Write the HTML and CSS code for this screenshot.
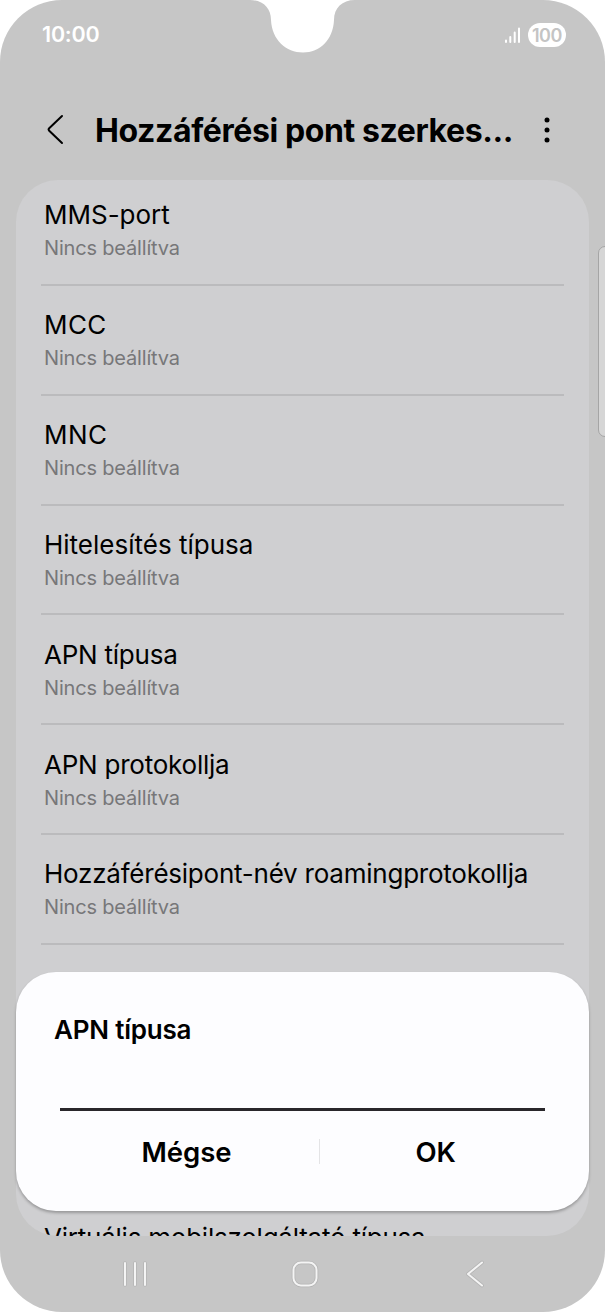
FILE: index.html
```html
<!DOCTYPE html>
<html lang="hu">
<head>
<meta charset="utf-8">
<title>Hozzáférési pont szerkesztése</title>
<link rel="stylesheet" href="styles.css">
</head>
<body>
<main class="screen">
  <svg class="notch" width="106" height="54" viewBox="0 0 106 54"><path d="M0 0C13 0 21 8 21 20C22 40 36 52.500 53 52.500S83 40 84 20C84 8 92 0 105 0Z" fill="#fff"/></svg>
  <header class="status">
    <span class="clock">10:00</span>
    <span class="indicators">
      <svg width="17" height="18" viewBox="0 0 17 18" stroke="#fff" stroke-width="2" stroke-linecap="round"><path d="M2 14.500v1.500M6.300 11v5M10.700 6.500v9.500M15 2.500v13.500"/></svg>
      <span class="battery">100</span>
    </span>
  </header>
  <div class="toolbar">
    <svg class="back" width="20" height="32" viewBox="0 0 20 32" fill="none" stroke="#000" stroke-width="2" stroke-linecap="round" stroke-linejoin="round"><path d="M17 3L4.200 15.300Q3 16.500 4.200 17.700L17 30"/></svg>
    <h1 class="heading">Hozzáférési pont szerkes...</h1>
    <svg class="more" width="8" height="28" viewBox="0 0 8 28"><circle cx="4" cy="4" r="2.500"/><circle cx="4" cy="14" r="2.500"/><circle cx="4" cy="24" r="2.500"/></svg>
  </div>
  <section class="card">
    <div class="row first"><div class="title mms">MMS-port</div><div class="sub">Nincs beállítva</div></div>
    <div class="row"><div class="title code">MCC</div><div class="sub">Nincs beállítva</div></div>
    <div class="row"><div class="title code">MNC</div><div class="sub">Nincs beállítva</div></div>
    <div class="row"><div class="title auth">Hitelesítés típusa</div><div class="sub">Nincs beállítva</div></div>
    <div class="row"><div class="title">APN típusa</div><div class="sub">Nincs beállítva</div></div>
    <div class="row"><div class="title">APN protokollja</div><div class="sub">Nincs beállítva</div></div>
    <div class="row"><div class="title">Hozzáférésipont-név roamingprotokollja</div><div class="sub">Nincs beállítva</div></div>
    <div class="row last"><div class="title">Virtuális mobilszolgáltató típusa</div></div>
  </section>
  <nav class="navbar">
    <svg width="26" height="28" viewBox="0 0 26 28" class="navicon"><path class="edge" d="M3 3v22M13 3v22M23 3v22"/><path d="M3 3v22M13 3v22M23 3v22"/></svg>
    <svg width="28" height="28" viewBox="0 0 28 28" class="navicon home"><rect class="edge" x="2.500" y="2.500" width="23" height="23" rx="7.500"/><rect x="2.500" y="2.500" width="23" height="23" rx="7.500"/></svg>
    <svg width="20" height="28" viewBox="0 0 20 28" class="navicon"><path class="edge" d="M17 2.500L3 14L17 25.500"/><path d="M17 2.500L3 14L17 25.500"/></svg>
  </nav>
  <div class="handle"></div>
  <section class="dialog">
    <h2 class="question">APN típusa</h2>
    <div class="field"></div>
    <div class="actions"><span class="cancel">Mégse</span><i class="split"></i><span class="ok">OK</span></div>
  </section>
</main>
</body>
</html>
```
FILE: styles.css
```css
* { box-sizing: border-box; }
body { margin: 0; background: #fff; font-family: Inter, "Liberation Sans", sans-serif; }
.screen { position: relative; width: 605px; height: 1312px; overflow: hidden; display: flex; flex-direction: column; background: #c6c6c6; border-radius: 62px; color: #000; }
.notch { position: absolute; left: 250px; top: 0; }
.status { height: 70px; padding: 0 39px 0 42px; display: flex; align-items: center; justify-content: space-between; }
.clock { color: #fff; font-size: 21.500px; font-weight: 600; line-height: 28px; letter-spacing: -.2px; margin-top: -2px; }
.indicators { display: flex; align-items: center; gap: 7px; }
.battery { width: 38px; height: 24px; border-radius: 12px; background: #fff; color: #c4c4c4; font-size: 18px; font-weight: 600; line-height: 25px; text-align: center; letter-spacing: -.4px; }
.toolbar { height: 110px; padding: 9px 54px 0 45px; display: flex; align-items: center; }
.back { flex: none; margin-top: -1px; }
.heading { margin: 2px auto 0 30px; font-size: 32px; font-weight: 700; line-height: 42px; letter-spacing: -.4px; white-space: nowrap; }
.more { flex: none; }
.card { height: 1056px; margin: 0 16px; padding: 0 25px; overflow: hidden; border-radius: 42px; background: #cfcfd1; }
.row { height: 109.850px; padding: 22.300px 3px 0; border-bottom: 2px solid #bbbbbd; }
.first { height: 105.900px; padding-top: 18px; }
.title { font-size: 26px; line-height: 34px; letter-spacing: -.23px; white-space: nowrap; }
.mms, .auth { letter-spacing: 0; }
.code { letter-spacing: .4px; }
.sub { font-size: 20px; line-height: 26px; margin-top: 3px; letter-spacing: -.18px; color: #777779; }
.last { border: 0; margin-top: 276.500px; padding-top: 0; }
.navbar { flex: 1; padding: 0 120px 0 122px; display: flex; align-items: center; justify-content: space-between; }
.navicon { fill: none; stroke: #f4f4f4; stroke-width: 2; stroke-linecap: round; stroke-linejoin: round; }
.home { margin-right: 4px; }
.edge { stroke: #b5b5b5; stroke-width: 3.600; }
.handle { position: absolute; left: 598px; top: 246px; width: 14px; height: 191px; border: 1.500px solid #a5a5a5; border-radius: 7px; background: #d6d6d6; }
.dialog { position: absolute; left: 16px; top: 972px; width: 573px; height: 239px; padding: 41px 38px 0; border-radius: 40px; background: #fdfdff; box-shadow: 0 2px 3px #0004; }
.question { margin: 0; font-size: 26px; font-weight: 600; line-height: 34px; letter-spacing: -.2px; white-space: nowrap; }
.field { height: 64px; margin: 0 6px; border-bottom: 3px solid #29272b; }
.actions { display: flex; align-items: center; height: 81px; font-size: 27.500px; font-weight: 600; }
.cancel { width: 265.500px; text-align: center; }
.ok { width: 231px; text-align: center; }
.split { width: 1.500px; height: 25px; background: #e4e4e6; }
```
